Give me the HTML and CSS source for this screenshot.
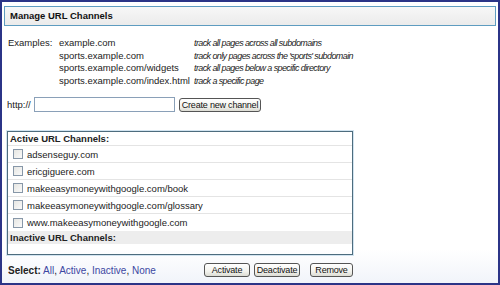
FILE: index.html
```html
<!DOCTYPE html>
<html lang="en">
<head>
    <meta charset="UTF-8">
    <title>Manage URL Channels</title>
    <link rel="stylesheet" href="styles.css">
</head>
<body>
    <div class="panel">
        <div class="panel-title">Manage URL Channels</div>

        <div class="panel-body">
            <div class="examples">
                <span class="ex-label">Examples:</span>
                <span>example.com</span>
                <span class="ex-note">track all pages across all subdomains</span>

                <span></span>
                <span>sports.example.com</span>
                <span class="ex-note">track only pages across the 'sports' subdomain</span>

                <span></span>
                <span>sports.example.com/widgets</span>
                <span class="ex-note">track all pages below a specific directory</span>

                <span></span>
                <span>sports.example.com/index.html</span>
                <span class="ex-note">track a specific page</span>
            </div>

            <form class="add-row">
                <label for="url">http://</label>
                <input type="text" id="url" class="url-input">
                <button type="button" class="btn btn-create">Create new channel</button>
            </form>

            <div class="channels">
                <div class="group-head">Active URL Channels:</div>
                <ul class="channel-list">
                    <li><span class="check"></span>adsenseguy.com</li>
                    <li><span class="check"></span>ericgiguere.com</li>
                    <li><span class="check"></span>makeeasymoneywithgoogle.com/book</li>
                    <li><span class="check"></span>makeeasymoneywithgoogle.com/glossary</li>
                    <li><span class="check"></span>www.makeeasymoneywithgoogle.com</li>
                </ul>
                <div class="group-head inactive">Inactive URL Channels:</div>
                <div class="empty"></div>
            </div>

            <div class="actions">
                <div class="select">
                    <strong>Select:</strong>
                    <a href="#">All</a>, <a href="#">Active</a>, <a href="#">Inactive</a>, <a href="#">None</a>
                </div>
                <div class="buttons">
                    <button type="button" class="btn btn-activate">Activate</button>
                    <button type="button" class="btn btn-deactivate">Deactivate</button>
                    <button type="button" class="btn btn-remove">Remove</button>
                </div>
            </div>
        </div>
    </div>
</body>
</html>
```

FILE: styles.css
```css
* {
    margin: 0;
    padding: 0;
    box-sizing: border-box;
}

body {
    font-family: 'Liberation Sans', Arial, sans-serif;
    font-size: 9.5px;
    color: #222;
    background: #fff;
}

.panel {
    width: 500px;
    height: 285px;
    border: 2px solid #2b3487;
    padding: 4px 2px 0;
    background: linear-gradient(180deg, #fff 0%, #fff 88%, #f1f4fa 100%);
}

.panel-title {
    height: 20px;
    line-height: 18px;
    padding-left: 5px;
    border: 1px solid #5e9cc0;
    background: linear-gradient(180deg, #f7f7f7, #ebebeb);
    font-weight: bold;
    font-size: 9.5px;
    color: #111;
}

.panel-body {
    padding: 0 0 0 3px;
}

.examples {
    display: grid;
    grid-template-columns: 51px 135px auto;
    align-items: baseline;
    line-height: 12.5px;
    margin-top: 11px;
    padding-left: 1px;
}

.ex-note {
    font-style: italic;
    font-size: 9px;
    letter-spacing: -0.6px;
}

.add-row {
    display: flex;
    align-items: center;
    margin-top: 10px;
}

.add-row label {
    width: 27px;
}

.url-input {
    width: 141px;
    height: 15px;
    border: 1px solid #8aa0b8;
    font-family: inherit;
    font-size: 9.5px;
}

.btn {
    height: 14px;
    border: 1px solid #555;
    border-radius: 3px;
    background: linear-gradient(180deg, #fff 0%, #f3f3ee 60%, #dcdcd4 100%);
    font-family: inherit;
    font-size: 9px;
    letter-spacing: -0.2px;
    color: #111;
    line-height: 12px;
    padding: 0;
    white-space: nowrap;
}

.btn-create {
    width: 82px;
    margin-left: 4px;
}

.channels {
    width: 346px;
    margin-top: 19px;
    border: 1px solid #4d6c7e;
    box-shadow: 0 0 0 1px #d2e4f0;
}

.group-head {
    height: 14px;
    line-height: 14px;
    padding-left: 2px;
    font-weight: bold;
    border-bottom: 1px solid #e4e4e4;
}

.group-head.inactive {
    height: 13px;
    line-height: 13px;
    background: #ededed;
    border-bottom: none;
}

.channel-list {
    list-style: none;
}

.channel-list li {
    display: flex;
    align-items: center;
    height: 17px;
    padding-left: 5px;
    border-bottom: 1px solid #e4e4e4;
}

.channel-list li:last-child {
    border-bottom: none;
}

.check {
    width: 10px;
    height: 10px;
    margin-right: 4px;
    border: 1px solid #8797a8;
    background: linear-gradient(135deg, #e6e6e2, #fafafa);
}

.empty {
    height: 10px;
}

.actions {
    display: flex;
    align-items: center;
    justify-content: space-between;
    width: 346px;
    margin-top: 8px;
}

.select {
    padding-left: 1px;
    font-size: 10px;
}

.select a {
    color: #3d47a2;
    text-decoration: none;
}

.buttons {
    display: flex;
}

.btn-activate,
.btn-deactivate {
    width: 46px;
    margin-right: 4px;
}

.btn-deactivate {
    margin-right: 10px;
}

.btn-remove {
    width: 43px;
}
```
